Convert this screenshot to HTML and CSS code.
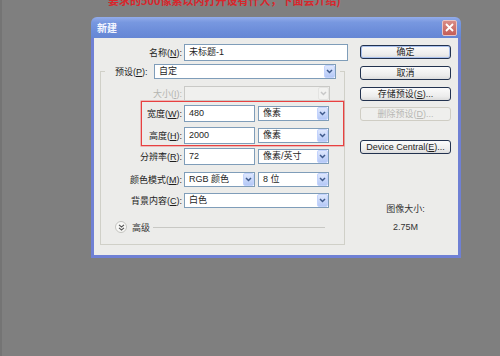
FILE: index.html
```html
<!DOCTYPE html>
<html>
<head>
<meta charset="utf-8">
<link rel="stylesheet" href="styles.css">
</head>
<body>
<div class="page">
  <div class="note"><span>要求的500像素以内打开设有什大，下面会介绍)</span></div>
  <div class="dialog">
    <div class="titlebar">
      <span class="title">新建</span>
      <span class="close"><svg width="9" height="9" viewBox="0 0 9 9"><path d="M1 1L8 8M8 1L1 8" stroke="#fff" stroke-width="1.8"/></svg></span>
    </div>
    <div class="body">
      <div class="form">
        <div class="row name">
          <label class="lbl">名称(<u>N</u>):</label>
          <div class="field w164">未标题-1</div>
        </div>
        <fieldset class="group">
          <legend class="preset">
            <label class="plbl">预设(<u>P</u>):</label>
            <div class="select w182">自定<span class="arrow"><svg width="7" height="5" viewBox="0 0 7 5"><path d="M1 1l2.5 2.5L6 1" stroke="#3f5a8c" stroke-width="1.5" fill="none"/></svg></span></div>
          </legend>
          <div class="row size disabled">
            <label class="lbl">大小(<u>I</u>):</label>
            <div class="select w146 dis"><span class="arrow"><svg width="7" height="5" viewBox="0 0 7 5"><path d="M1 1l2.5 2.5L6 1" stroke="#c8c8c8" stroke-width="1.5" fill="none"/></svg></span></div>
          </div>
          <div class="redbox">
            <div class="row">
              <label class="lbl sm">宽度(<u>W</u>):</label>
              <div class="field w71 h17">480</div>
              <div class="select w71">像素<span class="arrow"><svg width="7" height="5" viewBox="0 0 7 5"><path d="M1 1l2.5 2.5L6 1" stroke="#3f5a8c" stroke-width="1.5" fill="none"/></svg></span></div>
            </div>
            <div class="row r-h">
              <label class="lbl sm">高度(<u>H</u>):</label>
              <div class="field w71 h17">2000</div>
              <div class="select w71">像素<span class="arrow"><svg width="7" height="5" viewBox="0 0 7 5"><path d="M1 1l2.5 2.5L6 1" stroke="#3f5a8c" stroke-width="1.5" fill="none"/></svg></span></div>
            </div>
          </div>
          <div class="row r-res">
            <label class="lbl">分辨率(<u>R</u>):</label>
            <div class="field w71 h17">72</div>
            <div class="select w71">像素/英寸<span class="arrow"><svg width="7" height="5" viewBox="0 0 7 5"><path d="M1 1l2.5 2.5L6 1" stroke="#3f5a8c" stroke-width="1.5" fill="none"/></svg></span></div>
          </div>
          <div class="row r-mode">
            <label class="lbl">颜色模式(<u>M</u>):</label>
            <div class="select w71">RGB 颜色<span class="arrow"><svg width="7" height="5" viewBox="0 0 7 5"><path d="M1 1l2.5 2.5L6 1" stroke="#3f5a8c" stroke-width="1.5" fill="none"/></svg></span></div>
            <div class="select w71">8 位<span class="arrow"><svg width="7" height="5" viewBox="0 0 7 5"><path d="M1 1l2.5 2.5L6 1" stroke="#3f5a8c" stroke-width="1.5" fill="none"/></svg></span></div>
          </div>
          <div class="row r-bg">
            <label class="lbl">背景内容(<u>C</u>):</label>
            <div class="select w145">白色<span class="arrow"><svg width="7" height="5" viewBox="0 0 7 5"><path d="M1 1l2.5 2.5L6 1" stroke="#3f5a8c" stroke-width="1.5" fill="none"/></svg></span></div>
          </div>
          <div class="adv">
            <span class="chev"><svg width="7" height="7" viewBox="0 0 7 7"><path d="M1 0.8l2.5 2.2L6 0.8M1 3.8l2.5 2.2L6 3.8" stroke="#555" stroke-width="1.1" fill="none"/></svg></span>
            <span class="advtxt">高级</span>
            <span class="sep"></span>
          </div>
        </fieldset>
      </div>
      <div class="side">
        <div class="btn default">确定</div>
        <div class="btn b2">取消</div>
        <div class="btn b3">存储预设(<u>S</u>)...</div>
        <div class="btn b4 off">删除预设(<u>D</u>)...</div>
        <div class="btn b5">Device Central(<u>E</u>)...</div>
        <div class="info">
          <div>图像大小:</div>
          <div class="val">2.75M</div>
        </div>
      </div>
    </div>
  </div>
</div>
</body>
</html>
```

FILE: styles.css
```css
html, body {
  margin: 0;
  padding: 0;
}
body {
  background: #7f7f7f;
  width: 500px;
  height: 356px;
  overflow: hidden;
  font-family: "Liberation Sans", "Noto Sans CJK SC", sans-serif;
  font-size: 9px;
  color: #1e1e1e;
}
.page {
  height: 356px;
  border-left: 2px solid #747474;
  box-sizing: border-box;
}
.note {
  height: 8px;
  overflow: hidden;
  padding-left: 106px;
}
.note span {
  display: block;
  margin-top: -7px;
  line-height: 14px;
  font-size: 11px;
  font-weight: bold;
  color: #d8262c;
  font-family: "Noto Sans CJK SC", sans-serif;
}
.dialog {
  margin-top: 9px;
  margin-left: 89px;
  width: 370px;
}
.titlebar {
  height: 21px;
  border-radius: 6px 6px 0 0;
  background: linear-gradient(#93acea 0, #7898e0 25%, #6b8cd9 70%, #6586d4 100%);
  display: flex;
  align-items: center;
  justify-content: space-between;
  padding: 0 4px 0 6px;
}
.title {
  color: #f4f6ff;
  font-weight: bold;
  font-size: 10px;
  font-family: "Noto Sans CJK SC", sans-serif;
}
.close {
  width: 13px;
  height: 14px;
  border: 1px solid #e8c4c4;
  border-radius: 2px;
  background: linear-gradient(#d98c86, #c45e58);
  display: flex;
  align-items: center;
  justify-content: center;
}
.body {
  display: flex;
  background: #ececea;
  border: 3px solid #6f80d4;
  border-top: 0;
  height: 211px;
  padding: 6px 7px 0 6px;
  box-sizing: content-box;
}
.form {
  width: 248px;
}
.row {
  display: flex;
  align-items: center;
  height: 17px;
}
.lbl {
  width: 81px;
  padding-right: 2px;
  text-align: right;
  white-space: nowrap;
}
.lbl.sm {
  width: 40px;
}
.name .lbl {
  width: 82px;
}
u {
  text-decoration: underline;
}
.field, .select {
  box-sizing: border-box;
  border: 1px solid #7f9db9;
  background: #fff;
  padding-left: 4px;
  height: 16px;
  line-height: 14px;
  white-space: nowrap;
  position: relative;
  font-family: "Liberation Sans", "Noto Sans CJK SC", sans-serif;
}
.field.h17, .name .field {
  height: 17px;
  line-height: 15px;
}
.select {
  height: 15px;
  line-height: 13px;
}
.w164 { width: 164px; }
.w182 { width: 182px; }
.w146 { width: 146px; }
.w145 { width: 145px; }
.w71 { width: 71px; }
.row .select.w71, .row .field.w71 + .select {
  margin-left: 3px;
}
.r-mode .select.w71:first-of-type {
  margin-left: 0;
}
.arrow {
  position: absolute;
  right: 0;
  top: 0;
  bottom: 0;
  width: 11px;
  box-sizing: border-box;
  border: 1px solid #c3d3fd;
  border-radius: 2px;
  background: linear-gradient(#dfe8fd, #b4c8f6);
  display: flex;
  align-items: center;
  justify-content: center;
}
.select.dis {
  background: #f0f0ee;
  border-color: #c9c9c6;
}
.select.dis .arrow {
  background: #f2f2f0;
  border-color: #e4e4e2;
}
.disabled .lbl {
  color: #b4b4b0;
}
.group {
  margin: 3px 0 0 0;
  padding: 0 0 11px 0;
  width: 245px;
  box-sizing: border-box;
  border: 1px solid #d0d0c8;
  min-width: 0;
}
.preset {
  display: flex;
  align-items: center;
  margin-left: 4px;
  padding: 0 4px 0 10px;
  height: 15px;
}
.plbl {
  width: 37px;
  margin-right: 2px;
  white-space: nowrap;
}
.size {
  margin-top: 7px;
  height: 15px;
}
.redbox {
  margin-left: 40px;
  width: 203px;
  box-sizing: border-box;
  border: 1px solid rgb(232, 64, 64);
  box-shadow: 0 0 0 0.5px rgba(232, 64, 64, 0.6);
  padding: 3px 0 1px 0;
}
.r-h {
  margin-top: 5px;
}
.r-res {
  margin-top: 2px;
}
.r-mode {
  margin-top: 6px;
  height: 16px;
}
.r-bg {
  margin-top: 6px;
  height: 15px;
}
.adv {
  display: flex;
  align-items: center;
  margin-top: 13px;
  height: 12px;
  padding-left: 14px;
}
.chev {
  width: 10px;
  height: 10px;
  border-radius: 50%;
  border: 1px solid #c4c4c0;
  background: #f8f8f6;
  display: flex;
  align-items: center;
  justify-content: center;
}
.advtxt {
  margin-left: 5px;
  color: #333;
}
.sep {
  margin-left: 3px;
  width: 172px;
  height: 1px;
  background: #c8c8c4;
}
.side {
  margin-left: 12px;
  width: 91px;
}
.btn {
  box-sizing: border-box;
  height: 14px;
  line-height: 12px;
  border: 1px solid #22324f;
  border-radius: 3px;
  background: linear-gradient(#fbfbfb, #ececec 70%, #dcdcdc);
  text-align: center;
  white-space: nowrap;
  color: #1e1e1e;
}
.btn.default {
  margin-top: 1px;
  box-shadow: inset 0 0 0 1px #a9c0ec;
}
.b2 { margin-top: 7px; }
.b3 { margin-top: 7px; }
.b4 { margin-top: 6px; }
.b5 { margin-top: 19px; }
.btn.off {
  border-color: #cfcdc4;
  background: #efefed;
  color: #b8b8b4;
}
.info {
  margin-top: 46px;
  text-align: center;
  color: #333;
  line-height: 18px;
}
```
